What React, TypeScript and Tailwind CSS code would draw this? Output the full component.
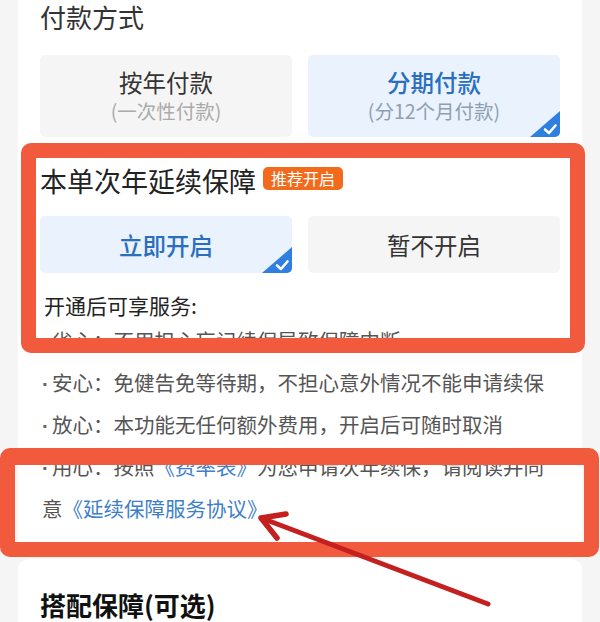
import React from 'react';

const font = { fontFamily: '"Noto Sans CJK SC", "Noto Sans", sans-serif' };

function Check() {
  return (
    <span className="absolute right-0 bottom-0 w-[30px] h-[26px]">
      <svg viewBox="0 0 30 26" className="w-full h-full">
        <path d="M30 0 L30 26 L0 26 Z" fill="#2f7fe0" />
        <path d="M15 18.5 L19 22 L25.5 14.5" fill="none" stroke="#fff" strokeWidth="2.6" strokeLinecap="round" strokeLinejoin="round" />
      </svg>
    </span>
  );
}

interface OptionProps {
  label: string;
  sub?: string;
  active?: boolean;
  tall?: boolean;
}

function Option({ label, sub, active, tall }: OptionProps) {
  return (
    <div
      className={
        'relative overflow-hidden rounded-[5px] flex flex-col items-center justify-center ' +
        (tall ? 'h-[82px] ' : 'h-[57px] ') +
        (active ? 'bg-[#e9f2fd]' : 'bg-[#f5f5f5]')
      }
    >
      <div className={'text-[23.5px] leading-[30px] ' + (active ? 'text-[#2a6fbd] font-medium' : 'text-[#333]')}>
        {label}
      </div>
      {sub && (
        <div className={'text-[19.5px] leading-[28px] ' + (active ? 'text-[#8e9fb3]' : 'text-[#aaa]')}>{sub}</div>
      )}
      {active && <Check />}
    </div>
  );
}

function Dot() {
  return (
    <span
      className="inline-block w-[10px] text-left font-bold text-[#666]"
      style={{ fontFamily: '"Liberation Sans", sans-serif' }}
    >
      ·
    </span>
  );
}

export default function App() {
  const bullets = [
    '省心：不用担心忘记续保导致保障中断',
    '安心：免健告免等待期，不担心意外情况不能申请续保',
    '放心：本功能无任何额外费用，开启后可随时取消',
  ];

  return (
    <div className="relative w-[600px] h-[622px] overflow-hidden bg-[#f5f5f5]" style={font}>
      {/* main card */}
      <div className="mx-[18px] bg-white rounded-b-[10px] px-[22px] pb-[20px]">
        <h2 className="text-[26px] leading-[34px] text-[#333]">付款方式</h2>

        <div className="mt-[21px] grid grid-cols-2 gap-[16px]">
          <Option label="按年付款" sub="(一次性付款)" tall />
          <Option label="分期付款" sub="(分12个月付款)" active tall />
        </div>

        <div className="mt-[26px] flex items-center gap-[7px] h-[36px]">
          <span className="text-[27px] leading-[36px] text-[#222]">本单次年延续保障</span>
          <span className="mt-[-6px] bg-[#f26b1d] text-white text-[16px] leading-[23px] px-[8px] rounded-[5px]">
            推荐开启
          </span>
        </div>

        <div className="mt-[17px] grid grid-cols-2 gap-[16px]">
          <Option label="立即开启" active />
          <Option label="暂不开启" />
        </div>

        <div className="mt-[17px] pl-[4px] text-[21px] leading-[30px] text-[#222]">开通后可享服务:</div>

        <div className="pl-[2px] text-[20.5px] leading-[41px] text-[#555] whitespace-nowrap">
          {bullets.map((b) => (
            <p key={b}>
              <Dot />
              {b}
            </p>
          ))}
          <p>
            <Dot />
            用心：按照<span className="text-[#3d80c8]">《费率表》</span>为您申请次年续保，请阅读并同
            <br />
            意<span className="text-[#3d80c8]">《延续保障服务协议》</span>
          </p>
        </div>
      </div>

      {/* second card */}
      <div className="mt-[10px] mx-[18px] bg-white rounded-t-[10px] px-[22px] pt-[29px] h-[80px]">
        <h2 className="text-[26px] leading-[34px] font-bold text-[#111]">搭配保障(可选)</h2>
      </div>

      {/* annotation boxes */}
      <div className="absolute left-[21px] top-[143px] w-[564px] h-[210px] border-[15px] border-[#f25a3e] rounded-[10px]" />
      <div className="absolute left-[0px] top-[448px] w-[599px] h-[109px] border-[15px] border-t-[17px] border-[#f25a3e] rounded-[10px]" />

      {/* arrow */}
      <svg className="absolute left-0 top-0 w-[600px] h-[622px] pointer-events-none" viewBox="0 0 600 622">
        <line x1="488" y1="604" x2="264" y2="519" stroke="#c3201f" strokeWidth="5" strokeLinecap="round" />
        <polyline
          points="286,514 261,518 277,538"
          fill="none"
          stroke="#c3201f"
          strokeWidth="5.5"
          strokeLinecap="round"
          strokeLinejoin="round"
        />
      </svg>
    </div>
  );
}
